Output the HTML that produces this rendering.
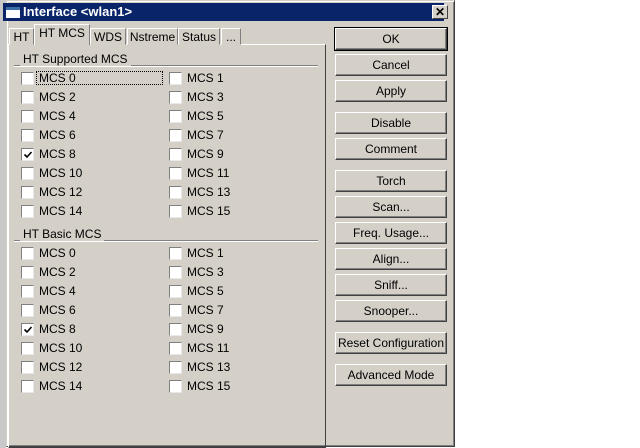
<!DOCTYPE html><html><head><style>
*{box-sizing:border-box;margin:0;padding:0}
body{width:640px;height:448px;background:#fff;position:relative;overflow:hidden;font-family:"Liberation Sans",sans-serif;font-size:12px;color:#000}
.a{position:absolute}
.win{left:6px;top:0;width:449px;height:447px;background:#d4d0c8;border:1px solid;border-color:#d4d0c8 #404040 #404040 #d4d0c8;box-shadow:inset 1px 1px #fff,inset -1px -1px #808080}
.title{left:3px;top:3px;width:441px;height:18px;background:#0a246a;color:#fff;font-weight:bold;font-size:13px;line-height:18px;padding-left:20px}
.tab{top:26px;height:19px;background:#d4d0c8;border:1px solid;border-color:#fff #808080 transparent #fff;line-height:17px;text-align:center;color:#000}
.panel{left:8px;top:44px;width:318px;height:404px;border:1px solid;border-color:#fff #404040 #404040 #fff}
.cb{width:13px;height:13px;background:#fff;border:1px solid;border-color:#808080 #e8e8e8 #e8e8e8 #808080}
.lb{line-height:13px}
.grp{line-height:13px;background:#d4d0c8;padding:0 3px}
.ln{height:2px;border-top:1px solid #808080;border-bottom:1px solid #fff}
.btn{left:335px;width:112px;height:22px;border:1px solid;border-color:#fff #404040 #404040 #fff;box-shadow:inset -1px -1px #808080;text-align:center;line-height:20px}
</style></head><body>
<div class="a" style="left:0;top:0;width:6px;height:448px;background:#c8c8c8"></div>
<div class="a win"></div>
<div class="a title"><span class="a" style="left:3px;top:4px;width:14px;height:11px;background:#fff;border-top:3px solid #3a6ea5"></span>Interface &lt;wlan1&gt;</div>
<div class="a" style="left:432px;top:5px;width:16px;height:14px;background:#d4d0c8;border:1px solid;border-color:#fff #404040 #404040 #fff;text-align:center;line-height:12px;font-weight:bold;font-size:12px">✕</div>
<div class="a panel"></div>
<div class="a tab" style="left:9px;width:25px;top:28px;height:17px">HT</div>
<div class="a tab" style="left:34px;width:56px;top:24px;height:21px;border-bottom:none;z-index:2">HT MCS</div>
<div class="a tab" style="left:90px;width:36px;top:28px;height:17px">WDS</div>
<div class="a tab" style="left:127px;width:51px;top:28px;height:17px">Nstreme</div>
<div class="a tab" style="left:178px;width:42px;top:28px;height:17px">Status</div>
<div class="a tab" style="left:221px;width:20px;top:28px;height:17px">...</div>
<div id="c"></div>
<div class="a ln" style="left:14px;top:65px;width:304px"></div>
<div class="a grp" style="left:20px;top:53px">HT Supported MCS</div>
<div class="a ln" style="left:14px;top:240px;width:304px"></div>
<div class="a grp" style="left:20px;top:228px">HT Basic MCS</div>
<div class="a" style="left:36px;top:71px;width:127px;height:14px;border:1px dotted #000"></div>
<script>
var h='';
[72,247].forEach(function(t){for(var r=0;r<8;r++){var y=t+r*19;
h+='<div class="a cb" style="left:21px;top:'+y+'px">'+(r==4?'<svg class="a" style="left:1px;top:1px" width="10" height="10"><path d="M1.5 4.5 L4 7 L8.5 2" stroke="#000" stroke-width="1.6" fill="none"/></svg>':'')+'</div><div class="a lb" style="left:39px;top:'+y+'px">MCS '+(r*2)+'</div>';
h+='<div class="a cb" style="left:169px;top:'+y+'px"></div><div class="a lb" style="left:187px;top:'+y+'px">MCS '+(r*2+1)+'</div>';}});
var b=[["OK",28],["Cancel",54],["Apply",80],["Disable",112],["Comment",138],["Torch",170],["Scan...",196],["Freq. Usage...",222],["Align...",248],["Sniff...",274],["Snooper...",300],["Reset Configuration",332],["Advanced Mode",364]];
b.forEach(function(x){h+='<div class="a btn" style="top:'+x[1]+'px'+(x[0]=="OK"?';outline:1px solid #000':'')+'">'+x[0]+'</div>'});
document.getElementById('c').innerHTML=h;
</script>
</body></html>
